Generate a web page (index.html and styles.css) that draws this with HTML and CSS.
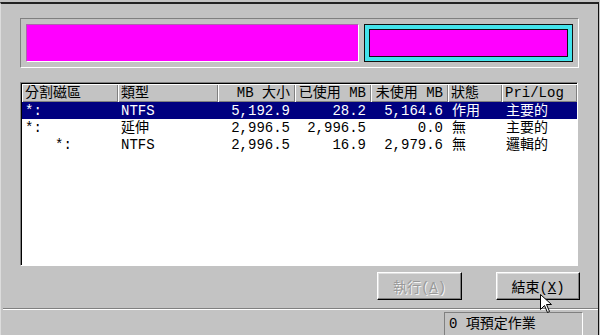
FILE: index.html
```html
<!DOCTYPE html>
<html lang="zh-Hant">
<head>
    <meta charset="UTF-8">
    <meta name="viewport" content="width=device-width, initial-scale=1.0">
    <title>磁碟管理員</title>
    <link rel="stylesheet" href="styles.css">
</head>
<body>
    <div class="window">
        <div class="content">
            <div class="disk-bar">
                <div class="part part-primary"></div>
                <div class="part-active">
                    <div class="part-fill"></div>
                </div>
            </div>

            <div class="list">
                <div class="list-head">
                    <div class="head-cell">分割磁區</div>
                    <div class="head-cell">類型</div>
                    <div class="head-cell num">MB 大小</div>
                    <div class="head-cell num">已使用 MB</div>
                    <div class="head-cell num">未使用 MB</div>
                    <div class="head-cell">狀態</div>
                    <div class="head-cell">Pri/Log</div>
                </div>
                <div class="list-row selected">
                    <div class="cell">*:</div>
                    <div class="cell">NTFS</div>
                    <div class="cell num">5,192.9</div>
                    <div class="cell num">28.2</div>
                    <div class="cell num">5,164.6</div>
                    <div class="cell">作用</div>
                    <div class="cell">主要的</div>
                </div>
                <div class="list-row">
                    <div class="cell">*:</div>
                    <div class="cell">延伸</div>
                    <div class="cell num">2,996.5</div>
                    <div class="cell num">2,996.5</div>
                    <div class="cell num">0.0</div>
                    <div class="cell">無</div>
                    <div class="cell">主要的</div>
                </div>
                <div class="list-row">
                    <div class="cell indent">*:</div>
                    <div class="cell">NTFS</div>
                    <div class="cell num">2,996.5</div>
                    <div class="cell num">16.9</div>
                    <div class="cell num">2,979.6</div>
                    <div class="cell">無</div>
                    <div class="cell">邏輯的</div>
                </div>
            </div>

            <div class="actions">
                <button class="btn" disabled>執行(<u>A</u>)</button>
                <button class="btn">結束(<u>X</u>)</button>
            </div>
        </div>

        <div class="separator"></div>

        <div class="status">
            <div class="status-cell">0 項預定作業</div>
        </div>

        <!-- mouse pointer over the close button -->
        <svg class="cursor" width="13" height="20" viewBox="0 0 13 20">
            <path d="M0.5 0.5 L0.5 15.5 L4.5 11.5 L7.5 18.5 L9.5 17.5 L6.5 10.5 L11.5 10.5 Z" fill="#fff" stroke="#000" stroke-width="1"/>
        </svg>
    </div>
</body>
</html>
```

FILE: styles.css
```css
:root {
    --face: #c3c3c3;
    --shadow: #808080;
    --light: #ffffff;
    --dark: #000000;
    --magenta: #ff00ff;
    --cyan: #44e4ec;
    --select: #000080;
}

body {
    margin: 0;
    background-color: var(--face);
    font-family: "Liberation Mono", "Noto Sans CJK TC", monospace;
    font-size: 14px;
    color: #000;
}

.window {
    position: relative;
    width: 599px;
    height: 333px;
    margin-top: 2px;
    box-sizing: border-box;
    border-top: 2px solid #222;
    border-right: 1px solid #111;
    border-left: 1px solid #dcdcdc;
    overflow: hidden;
}

.content {
    padding: 14px 0 0 19px;
}

/* partition map */
.disk-bar {
    display: flex;
    gap: 5px;
    width: 547px;
    padding: 5px;
    border: 1px solid;
    border-color: var(--shadow) var(--light) var(--light) var(--shadow);
}

.part {
    height: 38px;
    box-sizing: border-box;
    background-color: var(--magenta);
}

.part-primary {
    width: 333px;
    border: 1px solid;
    border-color: #b060b0 var(--light) var(--light) #b060b0;
}

.part-active {
    width: 209px;
    height: 38px;
    box-sizing: border-box;
    padding: 4px;
    background-color: var(--cyan);
    border: 1px solid #101010;
}

.part-fill {
    height: 100%;
    box-sizing: border-box;
    background-color: var(--magenta);
    border: 1px solid #101010;
}

/* partition list */
.list {
    width: 558px;
    height: 184px;
    margin-top: 14px;
    box-sizing: border-box;
    background-color: #fff;
    border: 1px solid;
    border-color: var(--shadow) var(--light) var(--light) var(--shadow);
    box-shadow: inset 1px 1px 0 #000;
    padding: 1px 0 0 1px;
}

.list-head,
.list-row {
    display: grid;
    grid-template-columns: 96px 100px 77px 76px 77px 54px 1fr;
}

.list-head {
    height: 18px;
}

.head-cell {
    background-color: var(--face);
    box-shadow: inset 1px 1px 0 var(--light), inset -1px -1px 0 var(--shadow);
    padding: 1px 3px 0;
    line-height: 17px;
    white-space: nowrap;
    overflow: hidden;
}

.list-row {
    height: 17px;
}

.cell {
    padding: 2px 3px 0;
    line-height: 15px;
    white-space: nowrap;
}

.num {
    text-align: right;
}

.head-cell.num,
.cell.num {
    padding-right: 5px;
}

.list-row .cell:nth-child(6),
.list-row .cell:nth-child(7) {
    padding-left: 4px;
}

.cell.indent {
    padding-left: 33px;
}

.selected {
    background-color: var(--select);
    color: #fff;
}

/* buttons */
.actions {
    display: flex;
    justify-content: flex-end;
    gap: 34px;
    width: 560px;
    margin-top: 6px;
}

.btn {
    width: 84px;
    height: 28px;
    padding: 0;
    font-family: inherit;
    font-size: 14px;
    color: #000;
    background-color: var(--face);
    border: 1px solid;
    border-color: var(--light) #000 #000 var(--light);
    box-shadow: inset -1px -1px 0 var(--shadow), inset 1px 1px 0 #dfdfdf;
}

.btn:first-child {
    width: 85px;
}

.btn:disabled {
    color: #9a9a9a;
    text-shadow: 1px 1px 0 #f4f4f4;
}

.separator {
    margin: 8px 0 0 2px;
    border-top: 1px solid var(--shadow);
    border-bottom: 1px solid var(--light);
}

/* status bar */
.status {
    display: flex;
    justify-content: flex-end;
    padding: 2px 15px 0 0;
}

.status-cell {
    width: 139px;
    height: 24px;
    box-sizing: border-box;
    padding-left: 4px;
    line-height: 22px;
    border: 1px solid;
    border-color: var(--shadow) var(--light) var(--light) var(--shadow);
}

.cursor {
    position: absolute;
    left: 539px;
    top: 290px;
}
```
